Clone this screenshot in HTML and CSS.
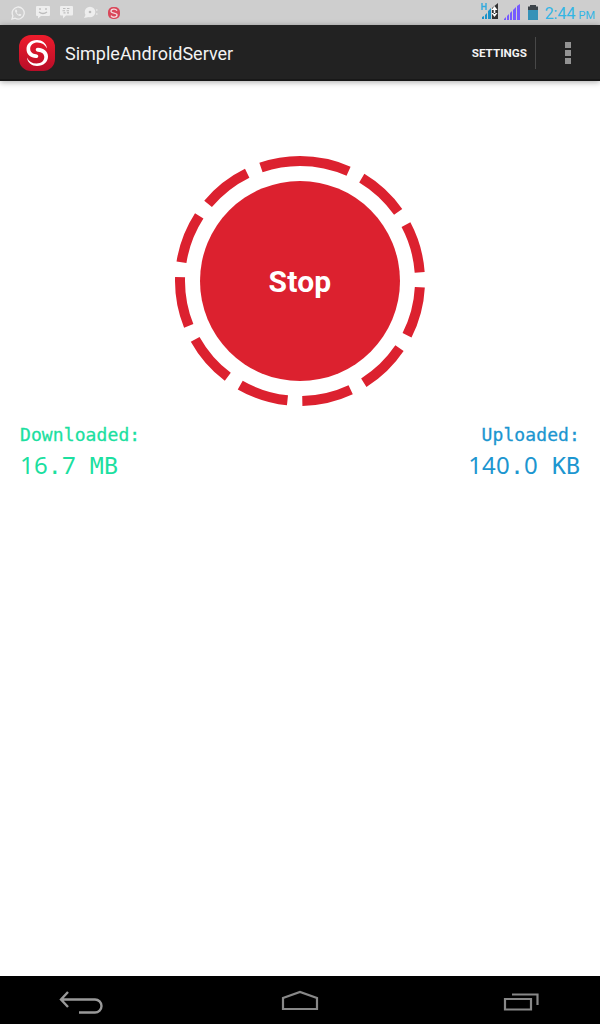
FILE: index.html
```
<!DOCTYPE html>
<html lang="en">
<head>
<meta charset="UTF-8">
<meta name="viewport" content="width=device-width, initial-scale=1.0">
<title>SimpleAndroidServer</title>
<link rel="stylesheet" href="styles.css">
</head>
<body>
<div class="status-bar">
    <div class="notifications">
        <svg width="14" height="14" viewBox="0 0 14 14">
            <path d="M1 13l.9-3.2A6 6 0 1 1 4.200 12.200z" fill="none" stroke="#eee" stroke-width="1.300"/>
            <path d="M4.700 3.500c-1 .6-.9 2 .3 3.700s3 3 4.300 2.700c.9-.3 1.200-1 1-1.400L8.800 7.700l-.9.9C6.900 8.200 6 7.300 5.600 6.300l.7-.8-.6-1.800z" fill="#eee"/>
        </svg>
        <svg width="14" height="13" viewBox="0 0 14 13">
            <path d="M1 0h12a1 1 0 0 1 1 1v8a1 1 0 0 1-1 1H5l-3 2.500V10H1a1 1 0 0 1-1-1V1a1 1 0 0 1 1-1z" fill="#eee"/>
            <path d="M4 2v2M10 2v2M3 6q4 3 8 0" fill="none" stroke="#bdbdbd" stroke-width="1.300"/>
        </svg>
        <svg width="13" height="13" viewBox="0 0 13 13">
            <path d="M1 0h11a1 1 0 0 1 1 1v7.500a1 1 0 0 1-1 1H6L3 12.500v-3H1a1 1 0 0 1-1-1V1a1 1 0 0 1 1-1z" fill="#eee"/>
            <path d="M3 2.500h2.500M7 2.500h2.500M2.500 4.700H5M6.500 4.700H9M3.500 6.900h2M7 6.900h2" stroke="#bdbdbd" stroke-width="1.100"/>
        </svg>
        <svg width="14" height="13" viewBox="0 0 14 13">
            <circle cx="6" cy="6" r="5.300" fill="#eee"/>
            <path d="M2 8l-2 4 5-1z" fill="#eee"/>
            <circle cx="6" cy="6" r="1.300" fill="#bdbdbd"/>
            <path d="M12.800 3v2M12.800 7v2" stroke="#e4e4e4" stroke-width="1.300"/>
        </svg>
        <svg width="12" height="12" viewBox="0 0 36 36">
            <rect width="36" height="36" rx="15" fill="#d9485a"/>
            <path d="M27 11C23 4 9 5 9 13c0 8 18 3 18 11 0 8-14 9-18 2" fill="none" stroke="#f3dcdf" stroke-width="4"/>
        </svg>
    </div>
    <div class="indicators">
        <svg class="network" width="18" height="18" viewBox="0 0 18 18">
            <path d="M1 1v7M5 1v7M1 4.500h4" stroke="#33aadd" stroke-width="1.400"/>
            <path d="M1 17v-2l2-1v3zM4 17v-4l2-2v6zM7 17V9l3-3v11z" fill="#1b93c9"/>
            <path d="M11 17V6l6-5v16z" fill="#333"/>
            <path d="M13.500 4l3 4h-6zM13.500 15l3-4h-6zM12.700 7h1.600v5h-1.600z" fill="#fff"/>
        </svg>
        <svg class="signal" width="16" height="16" viewBox="0 0 16 16">
            <path d="M0 16v-1l2-2v3zM3 16v-4l2-2v6zM6 16V9l2-2v9zM9 16V6l3-3v13zM13 16V2l3-2v16z" fill="#765aff"/>
        </svg>
        <svg class="battery" width="10" height="15" viewBox="0 0 10 15">
            <path d="M2 0h6v1.500h2v4H0v-4h2z" fill="#3c444a"/>
            <path d="M0 5h10v10H0z" fill="#3592b8"/>
        </svg>
        <span class="clock">2:44 <small>PM</small></span>
    </div>
</div>

<div class="action-bar">
    <svg class="logo" width="36" height="36" viewBox="0 0 36 36">
        <defs>
            <linearGradient id="red" x1="0" y1="0" x2="0" y2="1">
                <stop offset="0" stop-color="#ee1c2c"/>
                <stop offset="1" stop-color="#b80d28"/>
            </linearGradient>
        </defs>
        <rect width="36" height="36" rx="12" fill="url(#red)"/>
        <path d="M28 13.500C27.500 8 23 5 18 5 11.500 5 7.500 9 7.500 14c0 5.500 4 9 9.500 9 3 0 3-3.600 0-3.800-3.500-.2-5.800-2.200-5.800-5.400 0-3.600 3-6.300 7.300-6.300 4.500 0 7.500 2 9.500 6z" fill="#fff"/>
        <path d="M8 22.500C8.500 28 13 31 18 31c6.500 0 11-4 11-9.500 0-5.300-4.500-8.500-10-8.700-3-.1-3 3.600 0 3.900 3.700.3 6.300 2.100 6.300 5.300 0 3.700-3 6.500-7.800 6.500-4.500 0-7.500-2-9.500-6z" fill="#fff"/>
    </svg>
    <h1>SimpleAndroidServer</h1>
    <button class="settings">SETTINGS</button>
    <button class="overflow"><i></i><i></i><i></i></button>
</div>

<div class="content">
    <div class="power">
        <svg width="250" height="250" viewBox="0 0 250 250">
            <circle class="ring" cx="125" cy="125" r="120" transform="rotate(-90 125 125)"/>
            <circle class="disc" cx="125" cy="125" r="100"/>
        </svg>
        <span class="power-label">Stop</span>
    </div>
    <div class="stats">
        <div class="stat down">
            <div class="label">Downloaded:</div>
            <div class="value"><span class="num">16</span>.<span class="num">7</span> MB</div>
        </div>
        <div class="stat up">
            <div class="label">Uploaded:</div>
            <div class="value"><span class="num">140</span>.<span class="num">0</span> KB</div>
        </div>
    </div>
</div>

<div class="nav-bar">
    <svg width="46" height="24" viewBox="0 0 46 24">
        <path d="M10 1L3 8.500 10 16M3 8.500h34a6.500 6.500 0 0 1 0 13H21" transform="translate(0 1)" fill="none" stroke="#999" stroke-width="2.400"/>
    </svg>
    <svg class="home" width="38" height="22" viewBox="0 0 38 22">
        <path d="M2 19V8L19 2l17 6v11z" fill="none" stroke="#888" stroke-width="2.200"/>
    </svg>
    <svg width="36" height="18" viewBox="0 0 36 18">
        <path d="M2 6h26v10.500H2zM9 1.500h25.500V12" fill="none" stroke="#888" stroke-width="2.200"/>
    </svg>
</div>
</body>
</html>
```
FILE: styles.css
```
* {
    box-sizing: border-box;
}
body {
    margin: 0;
    height: 100vh;
    display: flex;
    flex-direction: column;
    background-color: #fff;
    font-family: Roboto, sans-serif;
}
svg {
    display: block;
}
.status-bar {
    height: 25px;
    padding: 0 5px 0 11px;
    display: flex;
    justify-content: space-between;
    background-color: #cecece;
}
.notifications {
    display: flex;
    align-items: center;
    gap: 10.500px;
}
.indicators {
    display: flex;
    align-items: center;
}
.network {
    margin: -3px 5px 0 0;
}
.signal {
    margin: -2px 8px 0 0;
}
.battery {
    margin-right: 7px;
}
.clock {
    margin-top: 1px;
    font-size: 16px;
    color: #33b5e5;
}
.clock small {
    font-size: 11px;
    margin-left: -1px;
}
.action-bar {
    height: 56px;
    padding: 2px 0 0 19px;
    display: flex;
    align-items: center;
    background-color: #222;
    border-bottom: 2px solid #181818;
    box-shadow: 0 1px 6px rgba(0, 0, 0, 0.35);
}
h1 {
    flex: 1;
    margin: 0 0 0 10px;
    font-size: 18px;
    font-weight: 400;
    color: #f3f3f3;
}
button {
    padding: 0;
    border: none;
    background: none;
    font-family: inherit;
}
.settings {
    height: 32px;
    padding-right: 8px;
    border-right: 1px solid #484848;
    font-size: 11.700px;
    font-weight: 700;
    color: #f3f3f3;
}
.overflow {
    width: 64px;
    display: flex;
    flex-direction: column;
    align-items: center;
    gap: 2px;
}
.overflow i {
    width: 6px;
    height: 6px;
    background-color: #939393;
}
.content {
    flex: 1;
    padding: 75px 20px 0;
}
.power {
    width: 250px;
    margin: 0 auto;
    display: grid;
    place-items: center;
}
.power > * {
    grid-area: 1 / 1;
}
.ring {
    fill: none;
    stroke: #dc212f;
    stroke-width: 10;
    stroke-dasharray: 50 14.900;
}
.disc {
    fill: #dc212f;
}
.power-label {
    font-size: 30px;
    font-weight: 700;
    letter-spacing: 0.200px;
    color: #fff;
}
.stats {
    margin-top: 17px;
    display: flex;
    justify-content: space-between;
    font-family: "DejaVu Sans Mono", monospace;
}
.label {
    font-size: 18px;
    line-height: 24px;
    letter-spacing: 0.100px;
    -webkit-text-stroke: 0.300px;
}
.value {
    margin-top: 3px;
    font-size: 23.300px;
    line-height: 30px;
}
.num {
    font-family: "Noto Sans", sans-serif;
    font-size: 24px;
    letter-spacing: 0.200px;
}
.down {
    color: #1cdfa0;
}
.up {
    color: #1c96d0;
    text-align: right;
}
.nav-bar {
    height: 48px;
    padding: 3px 61px 0 58px;
    display: flex;
    align-items: center;
    justify-content: space-between;
    background-color: #000;
}
.home {
    margin: -2px 8px 0 0;
}
```
